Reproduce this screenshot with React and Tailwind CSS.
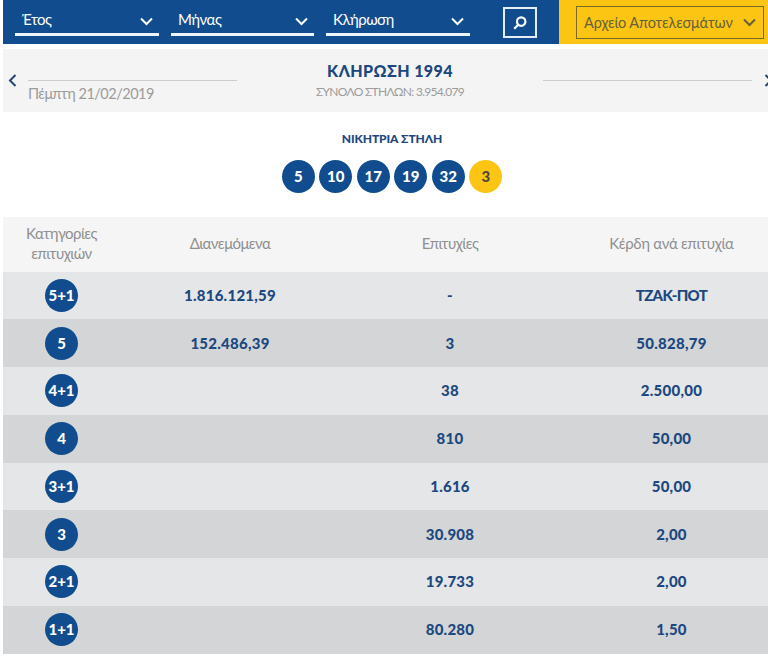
import React from 'react';

const filters = [
    { label: 'Έτος', width: 'w-[144px]' },
    { label: 'Μήνας', width: 'w-[143px]' },
    { label: 'Κλήρωση', width: 'w-[144px]' },
];

const winningNumbers = ['5', '10', '17', '19', '32'];
const joker = '3';

const rows = [
    { category: '5+1', shared: '1.816.121,59', winners: '-', prize: 'ΤΖΑΚ-ΠΟΤ' },
    { category: '5', shared: '152.486,39', winners: '3', prize: '50.828,79' },
    { category: '4+1', shared: '', winners: '38', prize: '2.500,00' },
    { category: '4', shared: '', winners: '810', prize: '50,00' },
    { category: '3+1', shared: '', winners: '1.616', prize: '50,00' },
    { category: '3', shared: '', winners: '30.908', prize: '2,00' },
    { category: '2+1', shared: '', winners: '19.733', prize: '2,00' },
    { category: '1+1', shared: '', winners: '80.280', prize: '1,50' },
];

const Chevron = ({ className }) => (
    <svg className={className} width="13" height="9" viewBox="0 0 13 9" fill="none" stroke="currentColor" strokeWidth="2">
        <path d="M1 1.5 6.5 7 12 1.5" />
    </svg>
);

const Ball = ({ children, yellow }) => (
    <span
        className={`flex size-[33px] shrink-0 items-center justify-center rounded-full text-[15px] leading-none font-black tracking-normal ${
            yellow ? 'bg-[#fdc513] text-[#4b4a3c]' : 'bg-[#114d8e] text-white'
        }`}
    >
        {children}
    </span>
);

const FilterBar = () => (
    <div className="flex h-11">
        <div className="flex w-[556px] shrink-0 bg-[#114d8e] pl-3 text-white">
            <div className="flex gap-3">
                {filters.map((filter) => (
                    <button
                        key={filter.label}
                        type="button"
                        className={`flex h-9 items-center justify-between border-b-[3px] border-[#eef4fa] pt-1.5 pr-1.5 pl-[7px] text-[15px] tracking-[-0.5px] ${filter.width}`}
                    >
                        {filter.label}
                        <Chevron className="mt-1" />
                    </button>
                ))}
            </div>
            <button
                type="button"
                aria-label="Αναζήτηση"
                className="mt-[7px] ml-[33px] flex h-[31px] w-[34px] items-center justify-center border-2 border-[#e6eef6]"
            >
                <svg width="14" height="14" viewBox="0 0 14 14" fill="none" stroke="currentColor" strokeWidth="2.2">
                    <circle cx="8.2" cy="5.6" r="4.2" />
                    <path d="M5.2 8.8 1.2 12.8" />
                </svg>
            </button>
        </div>
        <div className="flex-1 bg-[#fdc513] pt-1.5 pl-[17px]">
            <button
                type="button"
                className="flex h-[33px] w-[188px] items-center justify-between border border-[#7b6a24] px-[7px] text-[14.5px] tracking-[-0.1px] whitespace-nowrap text-[#65603c]"
            >
                Αρχείο Αποτελεσμάτων
                <Chevron />
            </button>
        </div>
    </div>
);

const DrawHeader = () => (
    <div className="mt-[5px] flex h-[63px] bg-[#f4f4f4] text-[#9b9b9b]">
        <svg className="mt-[25px] ml-[5px] shrink-0 text-[#24466e]" width="9" height="13" viewBox="0 0 9 13" fill="none" stroke="currentColor" strokeWidth="2">
            <path d="M7.5 1 2 6.5 7.5 12" />
        </svg>
        <div className="mt-[31px] ml-[11px] w-[209px] shrink-0 border-t border-[#cdcdcd]">
            <p className="pt-0.5 text-[14.5px] leading-[21px] tracking-[-0.5px]">Πέμπτη 21/02/2019</p>
        </div>
        <div className="w-[306px] shrink-0 text-center">
            <h1 className="pt-2.5 text-[16px] leading-6 font-black tracking-[0.4px] text-[#1c4880]">ΚΛΗΡΩΣΗ 1994</h1>
            <p className="text-[12px] leading-[18px] tracking-[-0.7px]">ΣΥΝΟΛΟ ΣΤΗΛΩΝ: 3.954.079</p>
        </div>
        <div className="mt-[31px] w-[209px] shrink-0 border-t border-[#cdcdcd]" />
        <svg className="mt-[25px] ml-3 shrink-0 text-[#24466e]" width="9" height="13" viewBox="0 0 9 13" fill="none" stroke="currentColor" strokeWidth="2">
            <path d="M1.5 1 7 6.5 1.5 12" />
        </svg>
    </div>
);

const WinningColumn = () => (
    <div className="flex h-[105px] flex-col items-center pt-[18px] pl-[13px]">
        <h2 className="text-[12px] leading-[18px] font-black tracking-[-0.1px] text-[#1c4880]">ΝΙΚΗΤΡΙΑ ΣΤΗΛΗ</h2>
        <div className="mt-3 flex gap-[4.5px]">
            {winningNumbers.map((number) => (
                <Ball key={number}>{number}</Ball>
            ))}
            <Ball yellow>{joker}</Ball>
        </div>
    </div>
);

const ResultsTable = () => (
    <table className="w-[780px] table-fixed border-collapse text-center">
        <colgroup>
            <col className="w-[117px]" />
            <col className="w-[220px]" />
            <col className="w-[220px]" />
            <col className="w-[223px]" />
        </colgroup>
        <thead>
            <tr className="h-[54.5px] bg-[#f5f5f6] text-[15px] leading-5 tracking-[-0.55px] text-[#8f8f8f]">
                <th className="p-0 px-4 pb-0.5 font-normal">Κατηγορίες επιτυχιών</th>
                <th className="p-0 pb-0.5 font-normal">Διανεμόμενα</th>
                <th className="p-0 pb-0.5 font-normal">Επιτυχίες</th>
                <th className="p-0 pb-0.5 font-normal tracking-[-0.3px]">Κέρδη ανά επιτυχία</th>
            </tr>
        </thead>
        <tbody>
            {rows.map((row) => (
                <tr
                    key={row.category}
                    className="h-[47.75px] bg-[#e5e6e8] text-[15px] leading-5 font-black tracking-[0.25px] text-[#1c4880] even:bg-[#d3d5d7]"
                >
                    <td className="p-0">
                        <div className="flex justify-center">
                            <Ball>{row.category}</Ball>
                        </div>
                    </td>
                    <td className="p-0 pb-px">{row.shared}</td>
                    <td className="p-0 pb-px">{row.winners}</td>
                    <td className={row.prize === 'ΤΖΑΚ-ΠΟΤ' ? 'p-0 pb-px tracking-[-0.7px]' : 'p-0 pb-px'}>{row.prize}</td>
                </tr>
            ))}
        </tbody>
    </table>
);

const App = () => (
    <div className="h-[672px] w-[768px] overflow-hidden bg-white pl-[3px] font-['Lato','Open_Sans',sans-serif]">
        <FilterBar />
        <DrawHeader />
        <WinningColumn />
        <ResultsTable />
    </div>
);

export default App;
